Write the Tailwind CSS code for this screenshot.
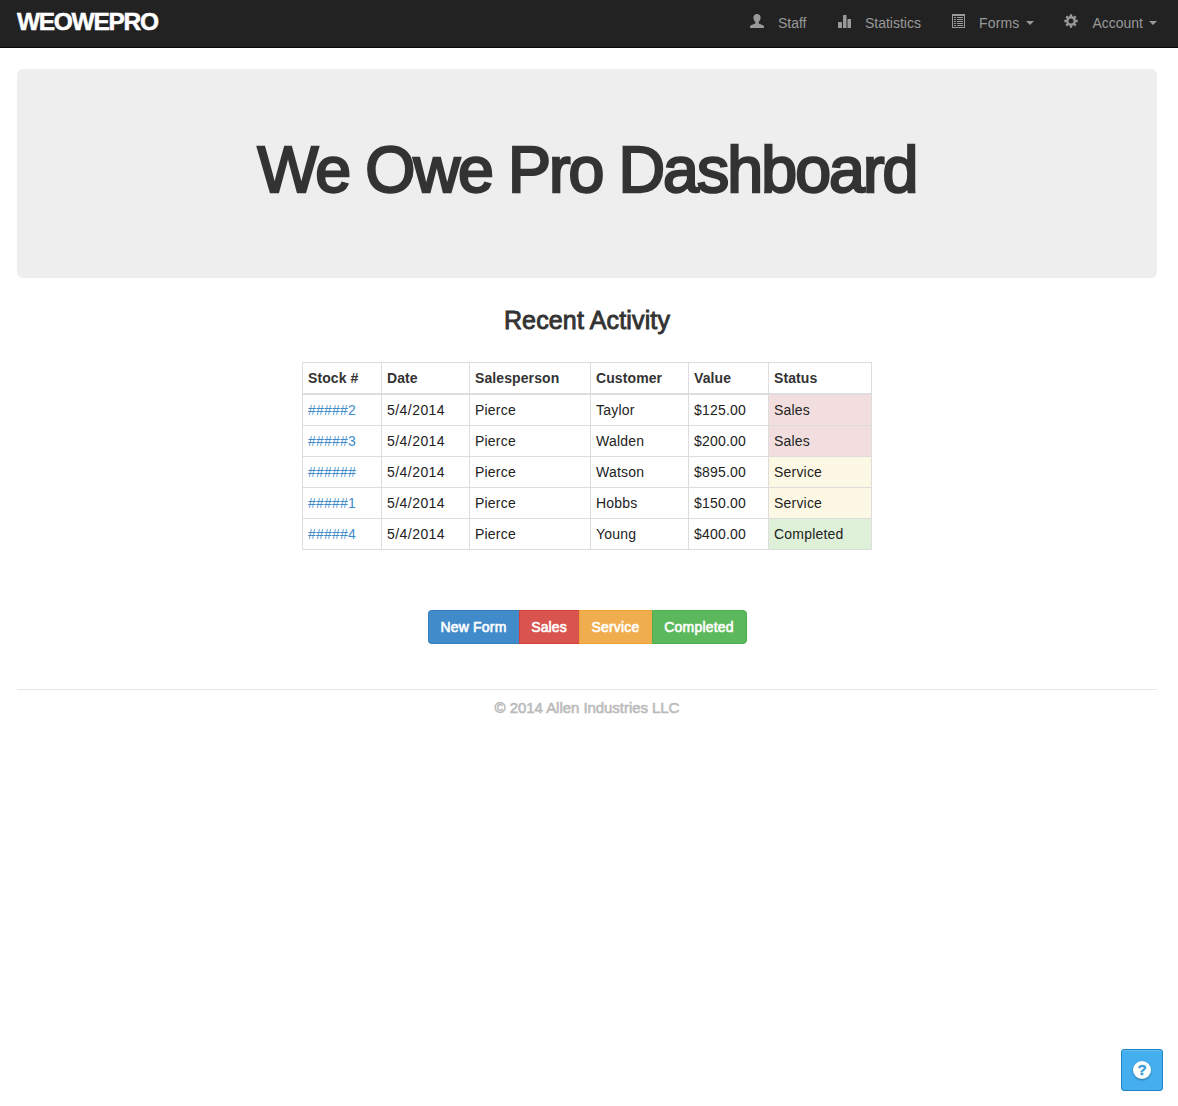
<!DOCTYPE html>
<html lang="en">
<head>
<meta charset="utf-8">
<title>We Owe Pro Dashboard</title>
<script src="https://cdn.jsdelivr.net/npm/@tailwindcss/browser@4"></script>
</head>
<body class="min-h-screen bg-white font-['Liberation_Sans',Arial,sans-serif] text-sm text-[#333]">
<nav class="flex h-12 items-start justify-between border-b border-[#080808] bg-[#222] pl-[17px] pr-[21px]">
  <a href="#" class="mt-[8px] text-[24.500px] leading-7 font-bold tracking-[-1.300px] text-white [-webkit-text-stroke:0.500px_white]">WEOWEPRO</a>
  <div class="mt-[13px] flex h-5 items-start leading-5 text-[#999]">
    <a href="#" class="flex w-[87px] gap-[14px]">
      <svg class="mt-px size-[14px]" viewBox="0 0 14 14" fill="currentColor"><path d="M7 0C4.8 0 3.400 1.300 3.400 3.500c0 1.700.7 3.300 1.900 4.500v1.200C4.600 10.300 0 10.700 0 12.800V14h14v-1.200c0-2.100-4.600-2.500-5.300-3.600V8c1.200-1.200 1.900-2.800 1.900-4.500C10.600 1.300 9.200 0 7 0z"/></svg>
      <span class="-ml-[0.500px]">Staff</span>
    </a>
    <a href="#" class="flex w-[115px] gap-[14px]">
      <svg class="mt-px h-[14px] w-[14px]" viewBox="0 0 14 14" fill="currentColor"><rect x="1" y="8" width="4" height="6" rx=".5"/><rect x="6" y="1" width="3.500" height="13" rx=".5"/><rect x="10.500" y="5" width="3.500" height="9" rx=".5"/></svg>
      <span class="-ml-[0.500px]">Statistics</span>
    </a>
    <a href="#" class="flex w-[112px] gap-[14px]">
      <svg class="mt-px size-[14px]" viewBox="0 0 14 14" fill="currentColor"><path fill-rule="evenodd" d="M0 0h13v14H0zM1 2v11h11V2z"/><path d="M2 3h2v1H2zM5 3h6v1H5zM2 5h2v1H2zM5 5h6v1H5zM2 7h2v1H2zM5 7h6v1H5zM2 9h2v1H2zM5 9h6v1H5zM2 11h2v1H2zM5 11h6v1H5z"/></svg>
      <span class="-mr-[8px] -ml-[1.500px] tracking-[0.200px]">Forms</span>
      <span class="mt-[8px] h-0 w-0 border-x-4 border-t-4 border-x-transparent border-t-[#999]"></span>
    </a>
    <a href="#" class="flex gap-[14px]">
      <svg class="mt-px size-[14px]" viewBox="0 0 14 14" fill="none" stroke="currentColor"><circle cx="7" cy="7" r="3.700" stroke-width="2.400"/><path stroke-width="2.400" d="M7 .3v2.200M7 11.500v2.200M.3 7h2.200M11.500 7h2.200M2.300 2.300l1.500 1.500M10.200 10.200l1.500 1.500M2.300 11.700l1.500-1.500M10.200 3.800l1.500-1.500"/></svg>
      <span class="-mr-[8px]">Account</span>
      <span class="mt-[8px] h-0 w-0 border-x-4 border-t-4 border-x-transparent border-t-[#999]"></span>
    </a>
  </div>
</nav>
<main class="mt-[21px] ml-[17px] flex w-[1140px] flex-col items-center">
  <header class="flex h-[209px] w-full justify-center rounded-md bg-[#eee] pt-[66px]">
    <h1 class="h-[70px] text-[64.500px] leading-[70px] tracking-[-1.950px] whitespace-nowrap [-webkit-text-stroke:2.400px_#333]">We Owe Pro Dashboard</h1>
  </header>
  <h2 class="mt-[29px] text-[25px] leading-[26px] tracking-[0.150px] [-webkit-text-stroke:0.900px_#333]">Recent Activity</h2>
  <table class="mt-[29px] w-[570px] table-fixed border-separate border-spacing-0 border-t border-l border-[#ddd] text-left leading-5 tracking-[0.200px] text-[#222] [&_td]:h-[31px] [&_td]:border-r [&_td]:border-b [&_td]:border-[#ddd] [&_td]:px-[5px] [&_td]:py-0 [&_th]:h-8 [&_th]:border-r [&_th]:border-b-2 [&_th]:border-[#ddd] [&_th]:px-[5px] [&_th]:py-0 [&_th]:tracking-[0.100px] [&_th]:text-[#333]">
    <colgroup><col class="w-[79px]"><col class="w-[88px]"><col class="w-[121px]"><col class="w-[98px]"><col class="w-[80px]"><col class="w-[103px]"></colgroup>
    <thead><tr><th>Stock #</th><th>Date</th><th>Salesperson</th><th>Customer</th><th>Value</th><th>Status</th></tr></thead>
    <tbody>
      <tr><td class="text-[#428bca]">#####2</td><td class="tracking-[0.450px]">5/4/2014</td><td>Pierce</td><td>Taylor</td><td>$125.00</td><td class="bg-[#f2dede]">Sales</td></tr>
      <tr><td class="text-[#428bca]">#####3</td><td class="tracking-[0.450px]">5/4/2014</td><td>Pierce</td><td>Walden</td><td>$200.00</td><td class="bg-[#f2dede]">Sales</td></tr>
      <tr><td class="text-[#428bca]">######</td><td class="tracking-[0.450px]">5/4/2014</td><td>Pierce</td><td>Watson</td><td>$895.00</td><td class="bg-[#fcf8e3]">Service</td></tr>
      <tr><td class="text-[#428bca]">#####1</td><td class="tracking-[0.450px]">5/4/2014</td><td>Pierce</td><td>Hobbs</td><td>$150.00</td><td class="bg-[#fcf8e3]">Service</td></tr>
      <tr><td class="text-[#428bca]">#####4</td><td class="tracking-[0.450px]">5/4/2014</td><td>Pierce</td><td>Young</td><td>$400.00</td><td class="bg-[#dff0d8]">Completed</td></tr>
    </tbody>
  </table>
  <div class="mt-[60px] flex h-[34px] text-white [-webkit-text-stroke:0.600px_white]">
    <button class="w-[91px] rounded-l border border-r-0 border-[#357ebd] bg-[#428bca] tracking-[0.180px]">New Form</button>
    <button class="w-[60px] border border-r-0 border-[#d43f3a] bg-[#d9534f] tracking-[0.100px]">Sales</button>
    <button class="w-[73px] border border-r-0 border-[#eea236] bg-[#f0ad4e] tracking-[0.180px]">Service</button>
    <button class="w-[95px] rounded-r border border-[#4cae4c] bg-[#5cb85c] tracking-[0.180px]">Completed</button>
  </div>
  <footer class="mt-[45px] w-full border-t border-[#e7e7e7] pt-[8px] text-center text-[15px] leading-5 tracking-[-0.050px] text-[#bbb] [-webkit-text-stroke:0.600px_#bbb]">© 2014 Allen Industries LLC</footer>
</main>
<button aria-label="Help" class="fixed right-[15px] bottom-[15px] flex size-[42px] items-center justify-center rounded-[3px] border border-[#1a84c7] bg-[#44aeef] shadow-[inset_0_1px_0_#6bbcf0]">
  <span class="flex size-[18px] items-center justify-center rounded-full bg-white pb-px text-[15px] leading-none font-bold text-[#3d9bd6] shadow-[0_1px_2px_rgba(0,0,0,0.35)] [-webkit-text-stroke:0.400px_#3d9bd6]">?</span>
</button>
</body>
</html>
